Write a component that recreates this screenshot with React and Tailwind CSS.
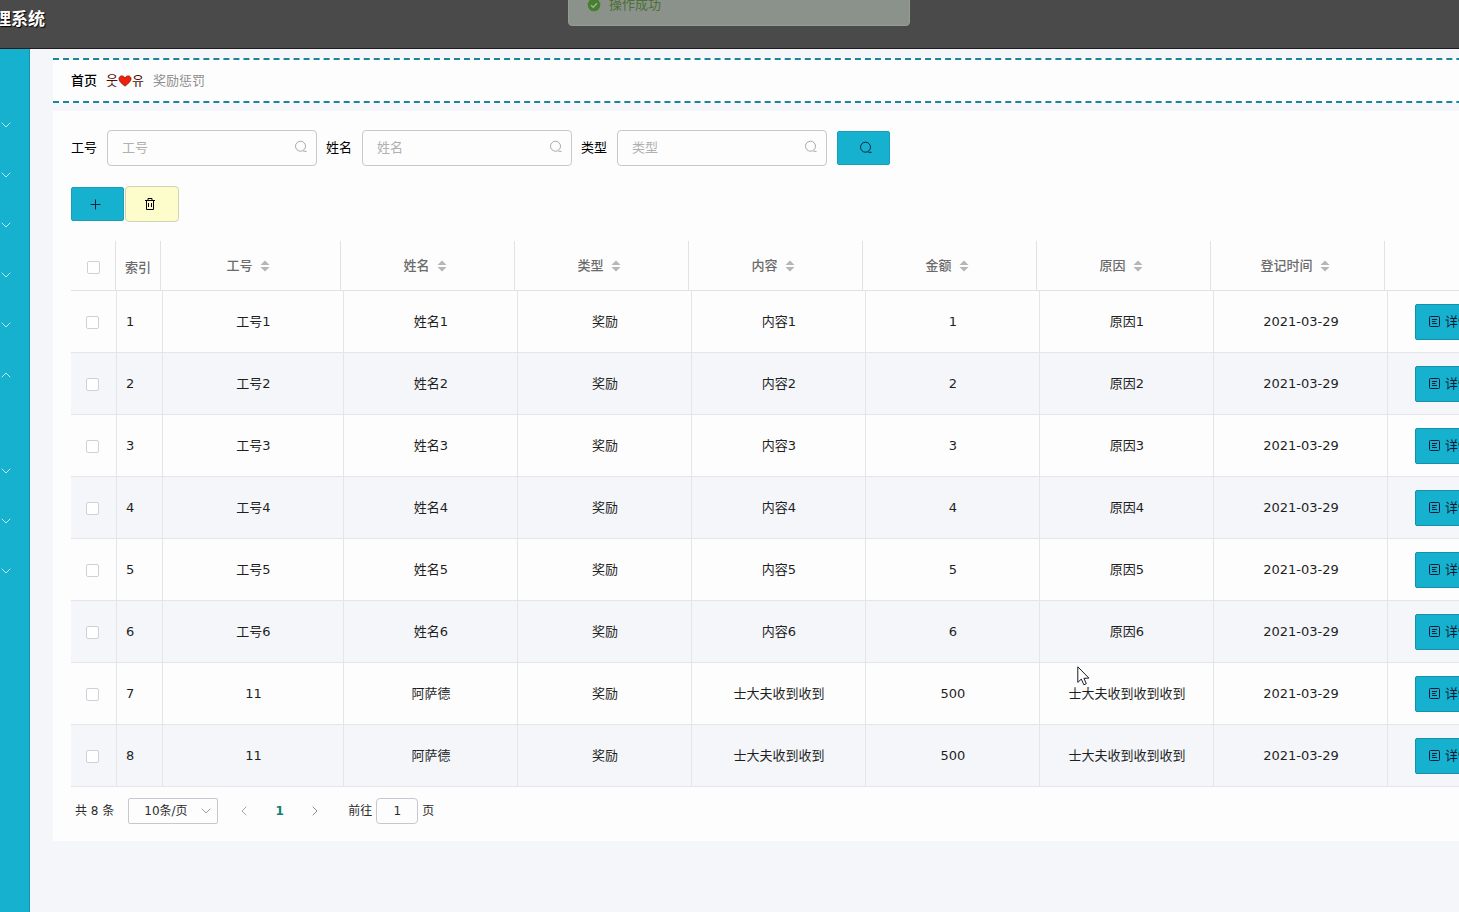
import React, { useState } from "react";

const FILTERS = [
  { id: "staff-no", label: "工号" },
  { id: "staff-name", label: "姓名" },
  { id: "record-type", label: "类型" },
];

const COLUMNS = ["工号", "姓名", "类型", "内容", "金额", "原因", "登记时间"];

const ROWS = [
  ...[1, 2, 3, 4, 5, 6].map((n) => [
    `工号${n}`,
    `姓名${n}`,
    "奖励",
    `内容${n}`,
    `${n}`,
    `原因${n}`,
    "2021-03-29",
  ]),
  ["11", "阿萨德", "奖励", "士大夫收到收到", "500", "士大夫收到收到收到", "2021-03-29"],
  ["11", "阿萨德", "奖励", "士大夫收到收到", "500", "士大夫收到收到收到", "2021-03-29"],
];

const MENU = [false, false, false, false, false, true, false, false, false];

function SearchIcon({ className }) {
  return (
    <svg viewBox="0 0 14 14" className={className} fill="none" stroke="currentColor" strokeWidth="1" aria-hidden="true">
      <circle cx="6.5" cy="6.2" r="5" />
      <path d="M9.8 11.3 H12.2" strokeLinecap="round" />
    </svg>
  );
}

function Chevron({ d, className }) {
  return (
    <svg viewBox="0 0 10 10" className={className} fill="none" stroke="currentColor" strokeWidth="1" aria-hidden="true">
      <path d={d} strokeLinecap="round" strokeLinejoin="round" />
    </svg>
  );
}

const DOWN = "M1 3 L5 7 L9 3";
const UP = "M1 7 L5 3 L9 7";
const LEFT = "M7 1 L3 5 L7 9";
const RIGHT = "M3 1 L7 5 L3 9";

function SortCaret() {
  return (
    <span className="inline-flex w-6 justify-center">
      <svg viewBox="0 0 10 12" className="h-3 w-[10px] fill-[#b4b6ba]" aria-hidden="true">
        <path d="M5 0.5 L9.5 5 H0.5 Z" />
        <path d="M5 11.5 L9.5 7 H0.5 Z" />
      </svg>
    </span>
  );
}

function Checkbox({ label }) {
  return (
    <input
      type="checkbox"
      aria-label={label}
      className="block size-[13px] appearance-none rounded-xs border border-[#cfd1d6] bg-white checked:bg-[#17b3d1]"
    />
  );
}

function Header() {
  return (
    <header className="relative h-[49px] overflow-hidden border-b border-[#1c1c1c] bg-[#4a4a4a]">
      <h1 className="flex h-[38px] w-[45px] items-center justify-end text-[17px] font-bold whitespace-nowrap text-white [text-shadow:1px_1px_1px_#000]">
        理系统
      </h1>
      <div
        role="status"
        className="absolute -top-[17px] left-[568px] flex h-[43px] w-[342px] items-center rounded-sm border border-[#949c93] bg-[#8b928b] pl-[18px] text-[#4c7034]"
      >
        <svg viewBox="0 0 14 14" className="mr-2 size-[14px]" aria-hidden="true">
          <circle cx="7" cy="7" r="6.3" fill="#47802c" />
          <path d="M4 7.2 L6.2 9.3 L10 5.2" fill="none" stroke="#a5aea2" strokeWidth="1.4" />
        </svg>
        操作成功
      </div>
    </header>
  );
}

function Sidebar() {
  return (
    <nav aria-label="menu" className="w-[30px] shrink-0 border-r border-[#1595ad] bg-[#17b1d0] pt-[51px]">
      <ul>
        {MENU.map((open, i) => (
          <li key={i} className={open ? "pb-[46px]" : ""}>
            <button type="button" aria-label={`menu ${i + 1}`} aria-expanded={open} className="flex h-[50px] w-full items-center pl-px text-[#bfeff5]">
              <Chevron d={open ? UP : DOWN} className="size-[10px]" />
            </button>
          </li>
        ))}
      </ul>
    </nav>
  );
}

function Breadcrumb() {
  return (
    <nav
      aria-label="breadcrumb"
      className="flex h-[45px] items-center border-y-2 border-dashed border-[#18859b] bg-[#fdfdfd] px-[18px]"
    >
      <a href="#home" className="font-medium text-black">
        首页
      </a>
      <span className="mx-[9px] flex items-center text-[#4a0f0a]">
        웃
        <svg viewBox="0 0 14 12" className="h-3 w-[14px]" aria-hidden="true">
          <path
            d="M7 11.2 C4.5 9 1 6.6 1 3.8 C1 2 2.3 0.9 3.8 0.9 C5.3 0.9 6.4 1.8 7 2.8 C7.6 1.8 8.7 0.9 10.2 0.9 C11.7 0.9 13 2 13 3.8 C13 6.6 9.5 9 7 11.2 Z"
            fill="#f0200c"
            stroke="#7a140a"
            strokeWidth="0.8"
          />
        </svg>
        유
      </span>
      <span className="text-[#8f8f8f]">奖励惩罚</span>
    </nav>
  );
}

function Filters() {
  return (
    <form className="flex items-center gap-[9px]" onSubmit={(e) => e.preventDefault()}>
      {FILTERS.map((f) => (
        <div key={f.id} className="flex items-center gap-[10px]">
          <label htmlFor={f.id}>{f.label}</label>
          <div className="relative">
            <input
              id={f.id}
              type="text"
              placeholder={f.label}
              className="block h-9 w-[210px] rounded-sm border border-[#c6c8cb] bg-[#fdfdfd] pr-8 pb-px pl-[14px] placeholder:text-[#b0b0b0]"
            />
            <SearchIcon className="absolute top-[10px] right-[9px] size-[14px] text-[#a8a8a8]" />
          </div>
        </div>
      ))}
      <button
        type="submit"
        aria-label="搜索"
        className="ml-px flex h-[34px] w-[53px] items-center justify-center rounded-xs border border-[#1a9fb9] bg-[#17b1d0] pl-1 text-[#0c2340]"
      >
        <SearchIcon className="size-[14px]" />
      </button>
    </form>
  );
}

function Actions() {
  return (
    <div className="mt-5 flex items-center gap-px">
      <button
        type="button"
        aria-label="新增"
        className="flex h-[34px] w-[53px] items-center justify-center rounded-xs border border-[#1a9fb9] bg-[#17b1d0] pr-1 text-[#0c2340]"
      >
        <svg viewBox="0 0 11 11" className="size-[11px]" stroke="currentColor" aria-hidden="true">
          <path d="M5.5 0.5 V10.5 M0.5 5.5 H10.5" />
        </svg>
      </button>
      <button
        type="button"
        aria-label="删除"
        className="flex h-9 w-[54px] items-center justify-center rounded-sm border border-[#d3d3b4] bg-[#fdfccb] pr-1 text-black"
      >
        <svg viewBox="0 0 12 12" className="size-3" fill="none" stroke="currentColor" aria-hidden="true">
          <path d="M1 2.5 H11 M4 2.5 V0.5 H8 V2.5 M2.5 2.5 V11.5 H9.5 V2.5 M4.5 5 V9 M7.5 5 V9" />
        </svg>
      </button>
    </div>
  );
}

function RecordTable() {
  return (
    <table className="mt-[19px] block text-[#1f1f1f]">
      <thead className="block">
        <tr className="grid h-[50px] grid-cols-[45px_45px_180px_repeat(6,174px)_340px] border-b border-[#e0e2e6] text-[#6b6b6b]">
          <th className="flex items-center justify-center border-r border-[#e0e2e6] pt-1">
            <Checkbox label="全选" />
          </th>
          <th className="flex items-center border-r border-[#e0e2e6] pt-1 pl-[9px] font-medium">索引</th>
          {COLUMNS.map((c) => (
            <th key={c} className="flex items-center justify-center border-r border-[#e0e2e6] pl-[2px] font-medium">
              {c}
              <SortCaret />
            </th>
          ))}
          <th aria-label="操作" />
        </tr>
      </thead>
      <tbody className="block">
        {ROWS.map((row, i) => (
          <tr
            key={i}
            className="grid h-[62px] grid-cols-[46px_46px_181px_repeat(6,174px)_337px] border-b border-[#e3e5e9] even:bg-[#f4f6fa]"
          >
            <td className="flex items-center justify-center border-r border-[#e3e5e9] pt-px pr-[2px]">
              <Checkbox label={`选择第${i + 1}行`} />
            </td>
            <td className="flex items-center border-r border-[#e3e5e9] pl-[9px]">{i + 1}</td>
            {row.map((value, j) => (
              <td key={j} className="flex items-center justify-center border-r border-[#e3e5e9] pl-px">
                {value}
              </td>
            ))}
            <td className="flex items-center pl-[27px]">
              <button
                type="button"
                className="flex h-9 items-center gap-1 rounded-xs border border-[#1590a8] bg-[#17b1d0] px-3 text-[#0c1c38]"
              >
                <svg viewBox="0 0 13 13" className="size-[13px]" fill="none" stroke="currentColor" aria-hidden="true">
                  <rect x="1.5" y="1.5" width="10" height="10" rx="1" />
                  <path d="M4 4.5 H9 M4 6.5 H7.5 M4 8.5 H9" />
                </svg>
                详情
              </button>
            </td>
          </tr>
        ))}
      </tbody>
    </table>
  );
}

function Pagination() {
  const [page, setPage] = useState("1");
  return (
    <div className="mt-[11px] flex h-[26px] items-center pl-1 text-xs text-[#2b2b2b]">
      <span>共 8 条</span>
      <div className="relative ml-[14px]">
        <select
          aria-label="每页条数"
          className="block h-[26px] w-[90px] appearance-none rounded-xs border border-[#c6c8cb] bg-[#fdfdfd] pl-[15px]"
        >
          <option>10条/页</option>
        </select>
        <Chevron d={DOWN} className="pointer-events-none absolute top-2 right-[7px] size-[10px] text-[#a0a0a0]" />
      </div>
      <button type="button" aria-label="上一页" className="ml-2 flex w-9 justify-center text-[#a6a6a6]">
        <Chevron d={LEFT} className="size-[10px]" />
      </button>
      <button type="button" className="w-[35px] font-bold text-[#0f7f72]">
        1
      </button>
      <button type="button" aria-label="下一页" className="flex w-[35px] justify-center text-[#8c8c8c]">
        <Chevron d={RIGHT} className="size-[10px]" />
      </button>
      <label htmlFor="jump" className="ml-4">
        前往
      </label>
      <input
        id="jump"
        type="text"
        value={page}
        onChange={(e) => setPage(e.target.value)}
        className="mx-1 h-[26px] w-[42px] rounded-sm border border-[#c6c8cb] bg-[#fdfdfd] text-center"
      />
      <span>页</span>
    </div>
  );
}

function Pointer() {
  return (
    <svg viewBox="0 0 13 20" className="pointer-events-none absolute top-[666px] left-[1077px] h-5 w-[13px]" aria-hidden="true">
      <path
        d="M0.8 0.8 V16.4 L4.3 13.1 L6.9 18.8 L9.3 17.7 L6.9 12.3 L11.9 12.1 Z"
        fill="#fff"
        stroke="#1a1a2a"
        strokeWidth="1"
      />
    </svg>
  );
}

export default function App() {
  return (
    <div className="relative flex min-h-screen flex-col overflow-hidden bg-[#f4f6f9] font-['DejaVu_Sans','Noto_Sans_CJK_SC',sans-serif] text-[13px] leading-5 text-black">
      <Header />
      <div className="flex flex-1">
        <Sidebar />
        <main className="min-w-0 flex-1 pt-[9px] pl-[23px]">
          <div className="w-max">
            <Breadcrumb />
            <section className="mt-2 bg-[#fdfdfd] px-[18px] pt-[19px] pb-[17px]">
              <Filters />
              <Actions />
              <RecordTable />
              <Pagination />
            </section>
          </div>
        </main>
      </div>
      <Pointer />
    </div>
  );
}
